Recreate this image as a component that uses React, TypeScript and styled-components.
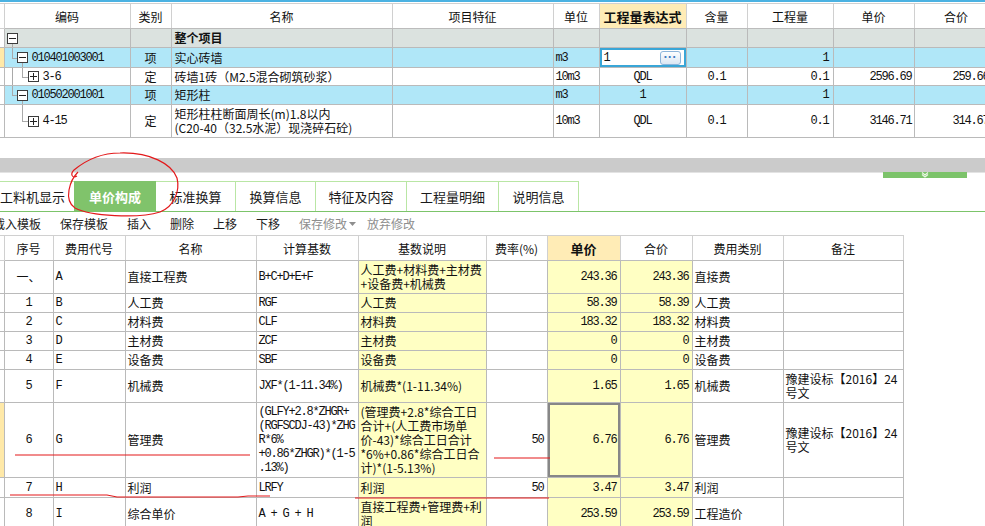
import React from 'react'
import styled, { createGlobalStyle, css } from 'styled-components'

type Align = 'left' | 'center' | 'right'

type Guide = { x: number; top?: boolean; bottom?: boolean; arm?: number }

type BillRow = {
  h: number
  bg: string
  mark?: boolean
  level: number
  sign: '+' | '-'
  code: string
  kind: string
  name: string[]
  bold?: boolean
  unit: string
  expr: string
  editing?: boolean
  content: string
  qty: string
  price: string
  total: string
  guides: Guide[]
}

type CostRow = {
  h: number
  no: string
  code: string
  name: string
  base: string[]
  desc: string[]
  rate: string
  price: string
  total: string
  type: string
  note: string[]
  selected?: boolean
}

const GlobalStyle = createGlobalStyle`
  html, body {
    margin: 0;
    padding: 0;
    background: #ffffff;
  }
  body {
    font-family: "Noto Sans CJK SC", "Noto Sans", sans-serif;
    font-size: 12px;
    color: #111;
  }
  * {
    box-sizing: border-box;
  }
`

const Page = styled.div`
  position: relative;
  width: 985px;
  height: 526px;
  overflow: hidden;
  background: #fff;
`

const TopPane = styled.div`
  height: 158px;
  border-top: 2px solid #4bb2e2;
  padding-top: 1px;
  overflow: hidden;
`

const Grid = styled.table<{ $width: number }>`
  width: ${p => p.$width}px;
  table-layout: fixed;
  border-collapse: collapse;
`

const Col = styled.col<{ $w: number }>`
  width: ${p => p.$w}px;
`

const Row = styled.tr<{ $h: number; $bg?: string }>`
  height: ${p => p.$h}px;
  background: ${p => p.$bg ?? '#fff'};
`

const monoText = css`
  font-family: "Liberation Mono", "Noto Sans CJK SC", monospace;
  font-size: 12px;
  letter-spacing: -1.2px;
`

const Head = styled.th<{ $hl?: boolean; $size?: number }>`
  border: 1px solid #d0d0d0;
  border-bottom-color: #bcbcbc;
  padding: 0;
  font-weight: ${p => (p.$hl ? 700 : 400)};
  font-size: ${p => p.$size ?? 12}px;
  background: ${p => (p.$hl ? '#ffecb6' : '#fff')};
  text-align: center;
  white-space: nowrap;
  overflow: hidden;
`

const Cell = styled.td<{
  $align?: Align
  $bg?: string
  $mono?: boolean
  $bold?: boolean
  $pad?: number
  $selected?: boolean
}>`
  border: 1px solid #bababa;
  padding: 0 ${p => p.$pad ?? 2}px;
  text-align: ${p => p.$align ?? 'left'};
  background: ${p => p.$bg ?? 'transparent'};
  font-weight: ${p => (p.$bold ? 700 : 400)};
  line-height: 14px;
  white-space: pre;
  overflow: hidden;
  vertical-align: middle;
  ${p => p.$mono && monoText}
  ${p =>
    p.$selected &&
    css`
      box-shadow: inset 0 0 0 2px #878787;
    `}
`

const Gutter = styled.td<{ $mark?: boolean }>`
  border: 1px solid #bababa;
  border-left: none;
  padding: 0;
  background: ${p => (p.$mark ? '#ffe9a8' : '#fff')};
`

const GutterHead = styled.th`
  border: 1px solid #d0d0d0;
  border-left: none;
  padding: 0;
  background: #fff;
`

/* tree column */
const TreeCell = styled.td`
  position: relative;
  border: 1px solid #bababa;
  padding: 0;
  overflow: hidden;
`

const TreeLine = styled.div<{ $level: number }>`
  position: relative;
  display: flex;
  align-items: center;
  gap: 4px;
  padding-left: ${p => [2, 12, 23][p.$level]}px;
  z-index: 1;
`

const ExpandBox = styled.span<{ $plus?: boolean }>`
  position: relative;
  flex: none;
  width: 11px;
  height: 11px;
  border: 1px solid #3c3c3c;
  background: #fff;

  &::before {
    content: '';
    position: absolute;
    left: 1px;
    top: 4px;
    width: 7px;
    height: 1px;
    background: #222;
  }
  ${p =>
    p.$plus &&
    css`
      &::after {
        content: '';
        position: absolute;
        left: 4px;
        top: 1px;
        width: 1px;
        height: 7px;
        background: #222;
      }
    `}
`

const CodeText = styled.span`
  ${monoText}
`

const VGuide = styled.i<{ $x: number; $top?: boolean; $bottom?: boolean }>`
  position: absolute;
  left: ${p => p.$x}px;
  top: ${p => (p.$top ? '0' : '50%')};
  bottom: ${p => (p.$bottom ? '0' : '50%')};
  width: 1px;
  background: #a9a9a9;
`

const HGuide = styled.i<{ $x: number; $w: number }>`
  position: absolute;
  left: ${p => p.$x}px;
  top: 50%;
  width: ${p => p.$w}px;
  height: 1px;
  background: #a9a9a9;
`

const EditCell = styled.td`
  border: 1px solid #bababa;
  padding: 0 5px 0 4px;
  background: #fff;
  box-shadow: inset 0 0 0 2px #39a6d7;
`

const EditInner = styled.div`
  display: flex;
  align-items: center;
  justify-content: space-between;
`

const EditBtn = styled.span`
  display: flex;
  align-items: center;
  justify-content: center;
  width: 21px;
  height: 14px;
  border: 1px solid #8db5da;
  border-radius: 3px;
  background: linear-gradient(#fdfeff, #dbe7f3);
  color: #3f7cc2;
  font-family: "DejaVu Sans", sans-serif;
  font-size: 10px;
  font-weight: 700;
  letter-spacing: 0.5px;
  line-height: 10px;
`

/* splitter */
const Splitter = styled.div`
  height: 14px;
  background: #cbcbcb;
`

const HandleRow = styled.div`
  display: flex;
  justify-content: flex-end;
  height: 6px;
  padding-right: 18px;
  margin-bottom: 3px;
  background: linear-gradient(#e3e3e3 1px, transparent 1px);
`

const Handle = styled.div`
  width: 84px;
  height: 6px;
  background: #7cc36a;
  display: flex;
  justify-content: center;
`

/* tabs */
const TabBar = styled.div`
  display: flex;
  height: 31px;
  margin-left: -10px;
  border-bottom: 1px solid #7cc46a;
`

const Tab = styled.div<{ $w: number; $active?: boolean }>`
  width: ${p => p.$w}px;
  height: 30px;
  margin-right: -1px;
  display: flex;
  align-items: center;
  justify-content: center;
  font-size: 13px;
  color: #1a1a1a;
  border: 1px solid #b9e6a4;
  border-bottom: none;
  ${p =>
    p.$active &&
    css`
      position: relative;
      background: #80c36b;
      border-color: #80c36b;
      color: #fff;
      font-weight: 700;
    `}
`

/* toolbar */
const Toolbar = styled.div`
  display: flex;
  align-items: center;
  gap: 19px;
  height: 23px;
  margin-left: -7px;
  font-size: 12px;
`

const ToolItem = styled.span<{ $disabled?: boolean }>`
  display: flex;
  align-items: center;
  gap: 2px;
  color: ${p => (p.$disabled ? '#8e8e8e' : '#1a1a1a')};
  white-space: nowrap;
`

const TightItem = styled(ToolItem)`
  margin-left: -8px;
`

const Marks = styled.svg`
  position: absolute;
  left: 0;
  top: 0;
  width: 985px;
  height: 526px;
  pointer-events: none;
  z-index: 5;
`

const topCols = [4, 126, 41, 221, 161, 46, 87, 61, 86, 81, 84]
const costCols = [4, 49, 72, 131, 102, 128, 61, 73, 72, 91, 120]

const YELLOW = '#ffffc3'
const CYAN = '#b0e7f8'

const billRows: BillRow[] = [
  {
    h: 19, bg: '#dbe2df', level: 0, sign: '-', code: '', kind: '', name: ['整个项目'], bold: true,
    unit: '', expr: '', content: '', qty: '', price: '', total: '',
    guides: [{ x: 7, bottom: true }],
  },
  {
    h: 20, bg: CYAN, mark: true, level: 1, sign: '-', code: '010401003001', kind: '项', name: ['实心砖墙'],
    unit: 'm3', expr: '1', editing: true, content: '', qty: '1', price: '', total: '',
    guides: [{ x: 7, top: true, arm: 5 }, { x: 17, bottom: true }],
  },
  {
    h: 18, bg: '#fff', level: 2, sign: '+', code: '3-6', kind: '定', name: ['砖墙1砖（M2.5混合砌筑砂浆）'],
    unit: '10m3', expr: 'QDL', content: '0.1', qty: '0.1', price: '2596.69', total: '259.669',
    guides: [{ x: 7, top: true, bottom: true }, { x: 17, top: true, arm: 6 }],
  },
  {
    h: 19, bg: CYAN, level: 1, sign: '-', code: '010502001001', kind: '项', name: ['矩形柱'],
    unit: 'm3', expr: '1', content: '', qty: '1', price: '', total: '',
    guides: [{ x: 7, top: true, arm: 5 }, { x: 17, bottom: true }],
  },
  {
    h: 33, bg: '#fff', level: 2, sign: '+', code: '4-15', kind: '定',
    name: ['矩形柱柱断面周长(m)1.8以内', '(C20-40（32.5水泥）现浇碎石砼)'],
    unit: '10m3', expr: 'QDL', content: '0.1', qty: '0.1', price: '3146.71', total: '314.671',
    guides: [{ x: 17, top: true, arm: 6 }],
  },
]

const NOTE = ['豫建设标【2016】24', '号文']

const costRows: CostRow[] = [
  { h: 33, no: '一、', code: 'A', name: '直接工程费', base: ['B+C+D+E+F'], desc: ['人工费+材料费+主材费', '+设备费+机械费'], rate: '', price: '243.36', total: '243.36', type: '直接费', note: [] },
  { h: 19, no: '1', code: 'B', name: '人工费', base: ['RGF'], desc: ['人工费'], rate: '', price: '58.39', total: '58.39', type: '人工费', note: [] },
  { h: 19, no: '2', code: 'C', name: '材料费', base: ['CLF'], desc: ['材料费'], rate: '', price: '183.32', total: '183.32', type: '材料费', note: [] },
  { h: 19, no: '3', code: 'D', name: '主材费', base: ['ZCF'], desc: ['主材费'], rate: '', price: '0', total: '0', type: '主材费', note: [] },
  { h: 19, no: '4', code: 'E', name: '设备费', base: ['SBF'], desc: ['设备费'], rate: '', price: '0', total: '0', type: '设备费', note: [] },
  { h: 33, no: '5', code: 'F', name: '机械费', base: ['JXF*(1-11.34%)'], desc: ['机械费*(1-11.34%)'], rate: '', price: '1.65', total: '1.65', type: '机械费', note: NOTE },
  {
    h: 75, no: '6', code: 'G', name: '管理费',
    base: ['(GLFY+2.8*ZHGR+', '(RGFSCDJ-43)*ZHG', 'R*6%', '+0.86*ZHGR)*(1-5', '.13%)'],
    desc: ['(管理费+2.8*综合工日', '合计+(人工费市场单', '价-43)*综合工日合计', '*6%+0.86*综合工日合', '计)*(1-5.13%)'],
    rate: '50', price: '6.76', total: '6.76', type: '管理费', note: NOTE, selected: true,
  },
  { h: 20, no: '7', code: 'H', name: '利润', base: ['LRFY'], desc: ['利润'], rate: '50', price: '3.47', total: '3.47', type: '利润', note: [] },
  { h: 33, no: '8', code: 'I', name: '综合单价', base: ['A + G + H'], desc: ['直接工程费+管理费+利', '润'], rate: '', price: '253.59', total: '253.59', type: '工程造价', note: [] },
]

const tabs = [
  { label: '工料机显示', w: 85 },
  { label: '单价构成', w: 82, active: true },
  { label: '标准换算', w: 81 },
  { label: '换算信息', w: 81 },
  { label: '特征及内容', w: 92 },
  { label: '工程量明细', w: 93 },
  { label: '说明信息', w: 81 },
]

const lines = (items: string[]) =>
  items.map((t, i) => (
    <React.Fragment key={i}>
      {i > 0 && <br />}
      {t}
    </React.Fragment>
  ))

export default function App() {
  return (
    <>
      <GlobalStyle />
      <Page>
        <TopPane>
          <Grid $width={998}>
            <colgroup>
              {topCols.map((w, i) => (
                <Col key={i} $w={w} />
              ))}
            </colgroup>
            <thead>
              <Row $h={25}>
                <GutterHead />
                <Head>编码</Head>
                <Head>类别</Head>
                <Head>名称</Head>
                <Head>项目特征</Head>
                <Head>单位</Head>
                <Head $hl $size={13}>工程量表达式</Head>
                <Head>含量</Head>
                <Head>工程量</Head>
                <Head>单价</Head>
                <Head>合价</Head>
              </Row>
            </thead>
            <tbody>
              {billRows.map((r, i) => (
                <Row key={i} $h={r.h} $bg={r.bg}>
                  <Gutter $mark={r.mark} />
                  <TreeCell>
                    {r.guides.map((g, j) => (
                      <React.Fragment key={j}>
                        <VGuide $x={g.x} $top={g.top} $bottom={g.bottom} />
                        {g.arm && <HGuide $x={g.x} $w={g.arm} />}
                      </React.Fragment>
                    ))}
                    <TreeLine $level={r.level}>
                      <ExpandBox $plus={r.sign === '+'} />
                      <CodeText>{r.code}</CodeText>
                    </TreeLine>
                  </TreeCell>
                  <Cell $align="center">{r.kind}</Cell>
                  <Cell $bold={r.bold} $pad={3}>{lines(r.name)}</Cell>
                  <Cell />
                  <Cell $mono>{r.unit}</Cell>
                  {r.editing ? (
                    <EditCell>
                      <EditInner>
                        <CodeText>{r.expr}</CodeText>
                        <EditBtn>···</EditBtn>
                      </EditInner>
                    </EditCell>
                  ) : (
                    <Cell $mono $align="center">{r.expr}</Cell>
                  )}
                  <Cell $mono $align="center">{r.content}</Cell>
                  <Cell $mono $align="right" $pad={4}>{r.qty}</Cell>
                  <Cell $mono $align="right">{r.price}</Cell>
                  <Cell $mono $align="right" $pad={3}>{r.total}</Cell>
                </Row>
              ))}
            </tbody>
          </Grid>
        </TopPane>

        <Splitter />
        <HandleRow>
          <Handle>
            <svg width="12" height="6" viewBox="0 0 12 6">
              <polyline points="3,0.5 6,3 9,0.5" fill="none" stroke="#e9f6e4" strokeWidth="1.2" />
              <polyline points="3,2.5 6,5 9,2.5" fill="none" stroke="#e9f6e4" strokeWidth="1.2" />
            </svg>
          </Handle>
        </HandleRow>

        <TabBar>
          {tabs.map(t => (
            <Tab key={t.label} $w={t.w} $active={t.active}>
              {t.label}
            </Tab>
          ))}
        </TabBar>

        <Toolbar>
          <ToolItem>载入模板</ToolItem>
          <ToolItem>保存模板</ToolItem>
          <ToolItem>插入</ToolItem>
          <ToolItem>删除</ToolItem>
          <ToolItem>上移</ToolItem>
          <ToolItem>下移</ToolItem>
          <ToolItem $disabled>
            保存修改
            <svg width="7" height="4" viewBox="0 0 7 4">
              <polygon points="0,0 7,0 3.5,4" fill="#8e8e8e" />
            </svg>
          </ToolItem>
          <TightItem $disabled>放弃修改</TightItem>
        </Toolbar>

        <Grid $width={903}>
          <colgroup>
            {costCols.map((w, i) => (
              <Col key={i} $w={w} />
            ))}
          </colgroup>
          <thead>
            <Row $h={25}>
              <GutterHead />
              <Head>序号</Head>
              <Head>费用代号</Head>
              <Head>名称</Head>
              <Head>计算基数</Head>
              <Head>基数说明</Head>
              <Head>费率(%)</Head>
              <Head $hl $size={13}>单价</Head>
              <Head>合价</Head>
              <Head>费用类别</Head>
              <Head>备注</Head>
            </Row>
          </thead>
          <tbody>
            {costRows.map((r, i) => (
              <Row key={i} $h={r.h}>
                <Gutter $mark={r.selected} />
                <Cell $align="center" $mono={r.no !== '一、'}>{r.no}</Cell>
                <Cell $mono>{r.code}</Cell>
                <Cell>{r.name}</Cell>
                <Cell $mono>{lines(r.base)}</Cell>
                <Cell $bg={YELLOW}>{lines(r.desc)}</Cell>
                <Cell $mono $align="right" $pad={3}>{r.rate}</Cell>
                <Cell $mono $align="right" $pad={3} $bg={YELLOW} $selected={r.selected}>
                  {r.price}
                </Cell>
                <Cell $mono $align="right" $pad={3} $bg={YELLOW}>{r.total}</Cell>
                <Cell>{r.type}</Cell>
                <Cell>{lines(r.note)}</Cell>
              </Row>
            ))}
          </tbody>
        </Grid>

        <Marks viewBox="0 0 985 526">
          <g fill="none" stroke="#e3191b" strokeWidth="1.2">
            <path d="M 78 172 C 70 180, 63 200, 75 208 C 90 216, 138 219, 160 212 C 175 206, 180 190, 177 178 C 172 164, 150 152, 120 153 C 100 153, 86 160, 74 170 C 70 174, 72 179, 77 176" />
            <polyline points="15,455 250,455" />
            <polyline points="494,458 550,458" />
            <polyline points="10,495 107,495 117,497 238,497 248,496 270,496" />
            <polyline points="355,498 549,498" />
          </g>
        </Marks>
      </Page>
    </>
  )
}
